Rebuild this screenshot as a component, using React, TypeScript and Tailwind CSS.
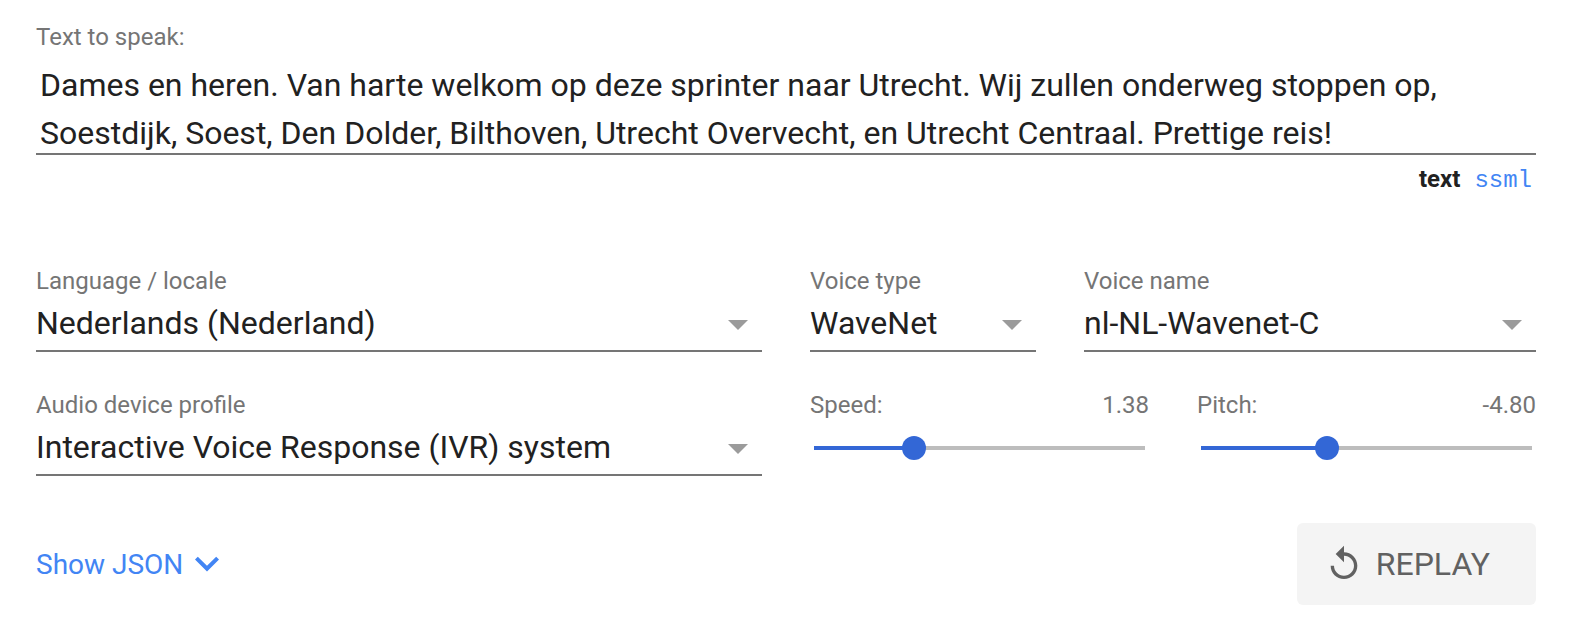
import { useState } from 'react';
import type { CSSProperties } from 'react';

const label = 'block text-2xl leading-7 text-[#757575]';

type SelectFieldProps = {
  id: string;
  title: string;
  options: string[];
};

function SelectField({ id, title, options }: SelectFieldProps) {
  return (
    <div>
      <label htmlFor={id} className={label}>
        {title}
      </label>
      <div className="relative">
        <select
          id={id}
          className="block h-[57px] w-full cursor-pointer appearance-none rounded-none border-b-2 border-[#757575] bg-transparent pr-12 text-[32px] text-[#212121] outline-none focus:border-[#3367d6]"
        >
          {options.map((option) => (
            <option key={option}>{option}</option>
          ))}
        </select>
        <svg
          viewBox="0 0 20 10"
          aria-hidden="true"
          className="pointer-events-none absolute top-[25px] right-3.5 h-2.5 w-5 fill-[#9b9b9b]"
        >
          <path d="M0 0h20L10 10z" />
        </svg>
      </div>
    </div>
  );
}

type SliderFieldProps = {
  id: string;
  title: string;
  min: number;
  max: number;
  initial: number;
};

function SliderField({ id, title, min, max, initial }: SliderFieldProps) {
  const [value, setValue] = useState(initial);
  const fill = `${((value - min) / (max - min)) * 100}%`;
  return (
    <div>
      <div className="flex justify-between">
        <label htmlFor={id} className={label}>
          {title}
        </label>
        <output htmlFor={id} className={label}>
          {value.toFixed(2)}
        </output>
      </div>
      <input
        id={id}
        type="range"
        min={min}
        max={max}
        step={0.01}
        value={value}
        onChange={(e) => setValue(Number(e.target.value))}
        style={{ '--fill': fill } as CSSProperties}
        className="-mx-2 mt-[17px] block h-6 w-[calc(100%+16px)] cursor-pointer appearance-none bg-[linear-gradient(to_right,#3367d6_var(--fill),#bdbdbd_var(--fill))] bg-[length:calc(100%-24px)_4px] bg-center bg-no-repeat outline-none [&::-webkit-slider-thumb]:size-6 [&::-webkit-slider-thumb]:appearance-none [&::-webkit-slider-thumb]:rounded-full [&::-webkit-slider-thumb]:bg-[#3367d6]"
      />
    </div>
  );
}

export default function App() {
  const [text, setText] = useState(
    'Dames en heren. Van harte welkom op deze sprinter naar Utrecht. Wij zullen onderweg stoppen op, Soestdijk, Soest, Den Dolder, Bilthoven, Utrecht Overvecht, en Utrecht Centraal. Prettige reis!',
  );

  return (
    <main className="bg-white pt-[23px] pr-[38px] pb-8 pl-9 font-['Roboto',sans-serif] text-[#212121]">
      <label htmlFor="speech" className={label}>
        Text to speak:
      </label>
      <textarea
        id="speech"
        rows={2}
        spellCheck={false}
        value={text}
        onChange={(e) => setText(e.target.value)}
        className="mt-2.5 block h-[94px] w-full resize-none overflow-hidden border-b-2 border-[#757575] bg-transparent px-1 text-[32px] leading-[48px] outline-none"
      />
      <div className="mt-2.5 flex h-7 items-baseline justify-end gap-3.5 pr-1 text-2xl leading-7">
        <button type="button" className="font-bold">
          text
        </button>
        <button type="button" className="font-['Liberation_Mono',monospace] text-[#4285f4]">
          ssml
        </button>
      </div>

      <div className="mt-[74px] grid grid-cols-2 gap-x-12 gap-y-[39px]">
        <SelectField
          id="language"
          title="Language / locale"
          options={['Nederlands (Nederland)', 'English (United States)']}
        />
        <div className="grid grid-cols-[1fr_2fr] gap-x-12">
          <SelectField id="type" title="Voice type" options={['WaveNet', 'Basic']} />
          <SelectField
            id="voice"
            title="Voice name"
            options={['nl-NL-Wavenet-C', 'nl-NL-Wavenet-A']}
          />
        </div>
        <SelectField
          id="profile"
          title="Audio device profile"
          options={['Interactive Voice Response (IVR) system', 'Default']}
        />
        <div className="grid grid-cols-2 gap-x-12">
          <SliderField id="speed" title="Speed:" min={0.25} max={4} initial={1.38} />
          <SliderField id="pitch" title="Pitch:" min={-20} max={20} initial={-4.8} />
        </div>
      </div>

      <div className="mt-[47px] flex items-center justify-between">
        <button
          type="button"
          className="flex items-center gap-3 pt-0.5 text-[28px] leading-8 text-[#4285f4]"
        >
          Show JSON
          <svg viewBox="6 7 12 10" aria-hidden="true" className="h-5 w-6 fill-current">
            <path d="M7.41 7.84 12 12.42l4.59-4.58L18 9.25l-6 6-6-6z" />
          </svg>
        </button>
        <button
          type="button"
          className="flex h-[82px] items-center gap-3 rounded-md bg-[#f4f4f4] pr-[46px] pl-[27px] text-[32px] text-[#616161]"
        >
          <svg viewBox="0 0 24 24" aria-hidden="true" className="size-10 fill-current">
            <path d="M12 5V1L7 6l5 5V7c3.31 0 6 2.69 6 6s-2.69 6-6 6-6-2.69-6-6H4c0 4.42 3.58 8 8 8s8-3.58 8-8-3.58-8-8-8z" />
          </svg>
          REPLAY
        </button>
      </div>
    </main>
  );
}
